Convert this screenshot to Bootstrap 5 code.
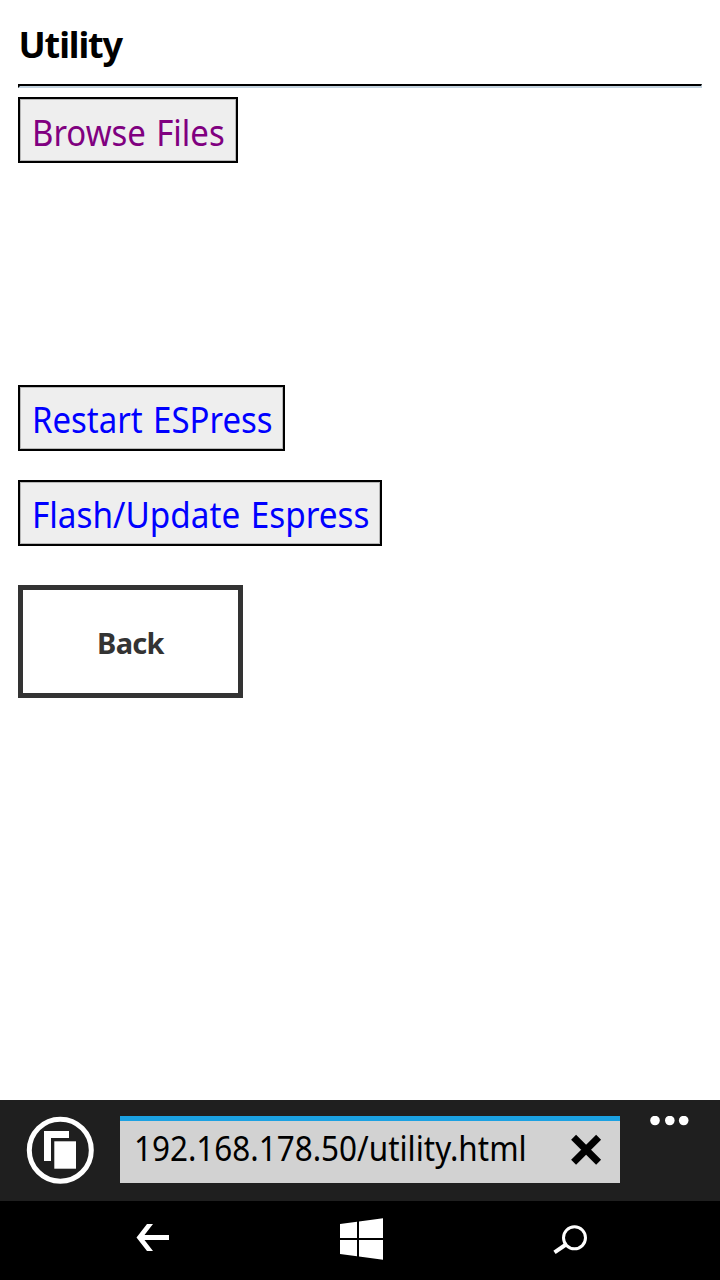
<!DOCTYPE html>
<html lang="en">
<head>
<meta charset="utf-8">
<meta name="viewport" content="width=device-width, initial-scale=1">
<title>Utility</title>
<link href="https://cdn.jsdelivr.net/npm/bootstrap@5.3.0/dist/css/bootstrap.min.css" rel="stylesheet">
<style>
body{font-family:"Noto Sans","Open Sans",sans-serif;background:#fff;color:#000}
.screen{height:1280px;overflow:hidden}
.page{padding:0 18px}
.page-title{height:84px;font-size:36px;line-height:90px;font-weight:700;letter-spacing:-1.1px;text-indent:.5px}
.rule{height:4px;border:solid;border-width:2px 1px 2px 2px;border-color:#000 #c3d3df #c3d3df #000;margin-bottom:9px}
.tool{height:66px;border:2px solid #000;border-radius:0;background:#eee;box-shadow:inset 0 0 0 1px #b8b8b8;color:#00f;font-size:36px;line-height:62px;padding:2px 0 0 12px;text-align:left;white-space:nowrap}
.tool:hover{background:#eee;color:#00f;border-color:#000}
.tool.visited{color:purple;width:220px;margin-bottom:222px;padding-top:3px}
.narrow{display:inline-block;word-spacing:2px;transform:scaleX(.915);transform-origin:0 50%}
.tool.restart{width:267px;margin-bottom:29px}
.tool.flash{width:364px;margin-bottom:39px}
.flash .narrow{transform:scaleX(.925)}
.back{width:225px;height:113px;border:5px solid #333;border-radius:0;color:#333;background:#fff;font-size:29px;font-weight:700;line-height:105px;padding:0;letter-spacing:-.7px}
.appbar{height:101px;background:#1f1f1f;padding:16px 30px 0 26px}
.address{width:500px;flex:none;height:67px;border-top:5px solid #1ba1e2;background:#d2d2d2;margin-left:26px;padding:0 18px 0 14px;font-size:35px;line-height:54px}
.address .url{width:400px;white-space:nowrap;transform:scaleX(.898);transform-origin:0 50%}
.more{margin-left:29px}
.navkeys{height:79px;background:#000}
svg{display:block;flex:none}
</style>
</head>
<body>
<div class="screen d-flex flex-column">
  <main class="page flex-grow-1 d-flex flex-column align-items-start">
    <h1 class="page-title m-0">Utility</h1>
    <div class="rule w-100"></div>
    <a class="btn tool visited"><span class="narrow">Browse Files</span></a>
    <a class="btn tool restart"><span class="narrow">Restart ESPress</span></a>
    <a class="btn tool flash"><span class="narrow">Flash/Update Espress</span></a>
    <button class="btn back" type="button">Back</button>
  </main>
  <footer>
    <div class="appbar d-flex align-items-start">
      <svg width="68" height="68" viewBox="0 0 68 68"><circle cx="34.3" cy="34.2" r="31" fill="none" stroke="#fff" stroke-width="5"/><path d="M18 15h25v7H25v23h-7z" fill="#fff"/><path d="M28.3 25.3H50v27.4H28.3z" fill="#fff"/></svg>
      <div class="address d-flex justify-content-between">
        <span class="url">192.168.178.50/utility.html</span>
        <svg width="31" height="58" viewBox="0 0 31 58"><path d="M2.600 16.200l25 25M27.600 16.200l-25 25" stroke="#000" stroke-width="7"/></svg>
      </div>
      <svg class="more" width="41" height="10" viewBox="0 0 41 10"><g fill="#fff"><circle cx="6" cy="4.500" r="4.800"/><circle cx="20.800" cy="4.500" r="4.800"/><circle cx="34.700" cy="4.500" r="4.800"/></g></svg>
    </div>
    <svg class="navkeys" width="720" height="79" viewBox="0 1201 720 79">
      <g fill="#fff">
        <path d="M136.500 1237.400L147 1224h6l-8.500 11H169v5h-24.500l8.500 11h-6z"/>
        <path d="M340 1224l17-2.300v16.300h-17zM359 1221.400l24-3.200v19.800h-24zM340 1240h17v16.200l-17-2.300zM359 1240h24v19.800l-24-3.200z"/>
      </g>
      <g fill="none" stroke="#fff"><circle cx="574.500" cy="1237.800" r="11" stroke-width="3"/><path d="M566 1244.500l-11.500 7.800" stroke-width="4"/></g>
    </svg>
  </footer>
</div>
<script src="https://cdn.jsdelivr.net/npm/bootstrap@5.3.0/dist/js/bootstrap.bundle.min.js"></script>
</body>
</html>
